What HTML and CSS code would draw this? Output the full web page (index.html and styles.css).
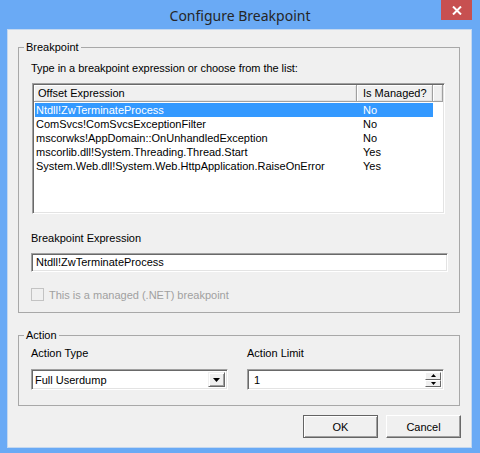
FILE: index.html
```html
<!DOCTYPE html>
<html>
<head>
<meta charset="utf-8">
<title>Configure Breakpoint</title>
<link rel="stylesheet" href="styles.css">
</head>
<body>
<div class="window">
  <div class="titlebar">
    <span class="title">Configure Breakpoint</span>
    <button class="close" aria-label="Close">
      <svg width="10" height="9" viewBox="0 0 10 9"><path d="M1 0.5 L9 8.5 M9 0.5 L1 8.5" stroke="#fff" stroke-width="2" fill="none"/></svg>
    </button>
  </div>
  <div class="client">
    <fieldset class="group group-bp">
      <legend>Breakpoint</legend>
      <p class="hint">Type in a breakpoint expression or choose from the list:</p>
      <div class="listview">
        <div class="lv-header">
          <div class="hcol c1">Offset Expression</div>
          <div class="hcol c2">Is Managed?</div>
          <div class="hcol c3"></div>
        </div>
        <div class="lv-body">
          <div class="row selected"><span class="c1">Ntdll!ZwTerminateProcess</span><span class="c2">No</span></div>
          <div class="row"><span class="c1">ComSvcs!ComSvcsExceptionFilter</span><span class="c2">No</span></div>
          <div class="row"><span class="c1">mscorwks!AppDomain::OnUnhandledException</span><span class="c2">No</span></div>
          <div class="row"><span class="c1">mscorlib.dll!System.Threading.Thread.Start</span><span class="c2">Yes</span></div>
          <div class="row"><span class="c1">System.Web.dll!System.Web.HttpApplication.RaiseOnError</span><span class="c2">Yes</span></div>
        </div>
      </div>
      <div class="field-label expr-label">Breakpoint Expression</div>
      <div class="textbox">Ntdll!ZwTerminateProcess</div>
      <div class="check disabled"><span class="box"></span><span class="check-text">This is a managed (.NET) breakpoint</span></div>
    </fieldset>
    <fieldset class="group group-action">
      <legend>Action</legend>
      <div class="action-row">
        <div class="action-col">
          <div class="field-label">Action Type</div>
          <div class="combo">
            <span class="combo-text">Full Userdump</span>
            <span class="drop"><svg width="7" height="4" viewBox="0 0 7 4"><path d="M0 0 H7 L3.5 4 Z" fill="#000"/></svg></span>
          </div>
        </div>
        <div class="action-col">
          <div class="field-label">Action Limit</div>
          <div class="spin">
            <span class="spin-text">1</span>
            <span class="spin-btns">
              <span class="sb"><svg width="5" height="3" viewBox="0 0 5 3"><path d="M2.5 0 L5 3 H0 Z" fill="#000"/></svg></span>
              <span class="sb"><svg width="5" height="3" viewBox="0 0 5 3"><path d="M0 0 H5 L2.5 3 Z" fill="#000"/></svg></span>
            </span>
          </div>
        </div>
      </div>
    </fieldset>
    <div class="buttons">
      <button class="btn default">OK</button>
      <button class="btn">Cancel</button>
    </div>
  </div>
</div>
</body>
</html>
```

FILE: styles.css
```css
* { box-sizing: border-box; }
html, body { margin: 0; padding: 0; }
body {
  width: 480px;
  height: 453px;
  background: #6aaaf5;
  font-family: "Liberation Sans", Arial, sans-serif;
  font-size: 11px;
  color: #000;
  overflow: hidden;
}
.window { width: 480px; height: 453px; }
.titlebar {
  height: 29px;
  display: grid;
  grid-template-columns: 1fr auto 1fr;
}
.title {
  grid-column: 2;
  font-family: "Noto Sans", sans-serif;
  font-size: 14px;
  line-height: 29px;
  color: #262626;
  padding-top: 1px;
}
.close {
  grid-column: 3;
  justify-self: end;
  align-self: start;
  margin: 0 8px 0 0;
  width: 31px;
  height: 20px;
  border: 0;
  padding: 0;
  background: #c75050;
  display: flex;
  align-items: center;
  justify-content: center;
}
.client {
  margin-left: 7px;
  width: 465px;
  height: 419px;
  background: #f0f0f0;
  border: 1px solid #c4d8f0;
  padding: 11px 11px 0 10px;
}
.group {
  margin: 0;
  padding: 0 12px;
  border: 1px solid #a8a8a8;
  width: 442px;
  min-width: 0;
}
.group legend {
  margin-left: -7px;
  padding: 0 2px;
  line-height: 13px;
  height: 13px;
}
.group-bp { padding-bottom: 11px; }
.hint { margin: 8px 0 0 0; line-height: 13px; letter-spacing: -0.05px; }
.listview {
  margin: 8px 0 0 1px;
  width: 413px;
  height: 131px;
  background: #fff;
  border: 1px solid;
  border-color: #a0a0a0 #fff #fff #a0a0a0;
  box-shadow: inset 1px 1px 0 #696969, inset -1px -1px 0 #e3e3e3;
  padding: 1px;
  display: flex;
  flex-direction: column;
}
.lv-header {
  display: flex;
  height: 17px;
  flex: none;
}
.hcol {
  background: #f0f0f0;
  border-right: 1px solid #a0a0a0;
  border-bottom: 1px solid #a0a0a0;
  box-shadow: inset 1px 1px 0 #fff, inset -1px -1px 0 #e3e3e3;
  line-height: 16px;
  white-space: nowrap;
}
.hcol.c1 { width: 323px; padding-left: 4px; }
.hcol.c2 { width: 76px; padding-left: 6px; }
.hcol.c3 { width: 10px; }
.lv-body { padding-top: 1px; }
.row {
  display: flex;
  height: 14px;
  line-height: 14px;
  margin-left: 1px;
  width: 398px;
  white-space: nowrap;
}
.row .c1 { width: 322px; padding-left: 1px; }
.row .c2 { padding-left: 6px; }
.row.selected { background: #3399ff; color: #fff; }
.field-label { line-height: 13px; }
.expr-label { margin-top: 18px; }
.textbox {
  margin-top: 8px;
  width: 417px;
  height: 19px;
  background: #fff;
  border: 1px solid;
  border-color: #a0a0a0 #fff #fff #a0a0a0;
  box-shadow: inset 1px 1px 0 #696969, inset -1px -1px 0 #e3e3e3;
  padding: 0 0 0 4px;
  line-height: 17px;
}
.check {
  margin-top: 16px;
  display: flex;
  align-items: center;
  height: 13px;
}
.check .box {
  width: 13px;
  height: 13px;
  border: 1px solid #c3c3c3;
  background: #f0f0f0;
  margin-right: 5px;
}
.check.disabled .check-text { color: #a0a0a0; }
.group-action {
  margin-top: 16px;
  padding-bottom: 15px;
}
.action-row {
  display: flex;
  gap: 19px;
  margin-top: 5px;
}
.action-col { width: 197px; }
.combo, .spin {
  margin-top: 9px;
  width: 197px;
  height: 21px;
  background: #fff;
  border: 1px solid;
  border-color: #a0a0a0 #fff #fff #a0a0a0;
  box-shadow: inset 1px 1px 0 #696969, inset -1px -1px 0 #e3e3e3;
  padding: 2px;
  display: flex;
  align-items: stretch;
}
.combo-text { flex: 1; line-height: 17px; padding-left: 1px; }
.drop {
  width: 17px;
  background: #f0f0f0;
  border: 1px solid;
  border-color: #f0f0f0 #696969 #696969 #f0f0f0;
  box-shadow: inset 1px 1px 0 #fff, inset -1px -1px 0 #a0a0a0;
  display: flex;
  align-items: center;
  justify-content: center;
}
.spin-text { flex: 1; line-height: 17px; padding-left: 4px; }
.spin-btns {
  width: 16px;
  display: flex;
  flex-direction: column;
}
.sb {
  flex: 1;
  background: #f0f0f0;
  border: 1px solid;
  border-color: #fff #696969 #696969 #fff;
  display: flex;
  align-items: center;
  justify-content: center;
}
.buttons {
  margin-top: 9px;
  margin-right: -1px;
  display: flex;
  justify-content: flex-end;
  gap: 8px;
}
.btn {
  width: 75px;
  height: 23px;
  font-family: "Liberation Sans", Arial, sans-serif;
  font-size: 11px;
  color: #000;
  background: #f0f0f0;
  border: 1px solid;
  border-color: #fff #696969 #696969 #fff;
  box-shadow: inset -1px -1px 0 #a0a0a0;
  padding: 0;
}
.btn.default {
  border: 1px solid #646464;
  box-shadow: inset 1px 1px 0 #fff, inset -1px -1px 0 #a0a0a0;
}
```
